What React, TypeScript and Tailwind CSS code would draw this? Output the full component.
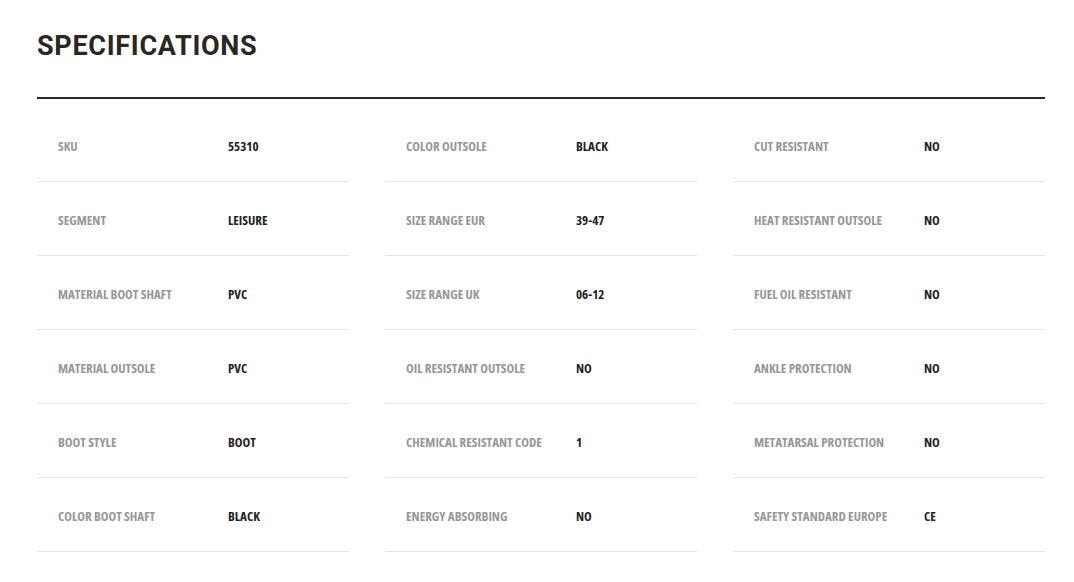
const columns: [string, string][][] = [
  [
    ["SKU", "55310"],
    ["SEGMENT", "LEISURE"],
    ["MATERIAL BOOT SHAFT", "PVC"],
    ["MATERIAL OUTSOLE", "PVC"],
    ["BOOT STYLE", "BOOT"],
    ["COLOR BOOT SHAFT", "BLACK"],
  ],
  [
    ["COLOR OUTSOLE", "BLACK"],
    ["SIZE RANGE EUR", "39-47"],
    ["SIZE RANGE UK", "06-12"],
    ["OIL RESISTANT OUTSOLE", "NO"],
    ["CHEMICAL RESISTANT CODE", "1"],
    ["ENERGY ABSORBING", "NO"],
  ],
  [
    ["CUT RESISTANT", "NO"],
    ["HEAT RESISTANT OUTSOLE", "NO"],
    ["FUEL OIL RESISTANT", "NO"],
    ["ANKLE PROTECTION", "NO"],
    ["METATARSAL PROTECTION", "NO"],
    ["SAFETY STANDARD EUROPE", "CE"],
  ],
];

export default function App() {
  return (
    <div className="bg-white min-h-screen pl-[37px] pr-[29px] pt-[30px] font-['Open_Sans',sans-serif]">
      <h2 className="font-['Roboto',sans-serif] text-[27px] leading-[32px] font-bold tracking-[0.7px] text-[#2a2623]">
        SPECIFICATIONS
      </h2>
      <div className="mt-[35px] h-[2px] bg-[#2b2b2b]" />

      <div className="grid grid-cols-3 gap-x-[36px] mt-[9px]">
        {columns.map((col, i) => (
          <div key={i} className="flex flex-col">
            {col.map(([label, value]) => (
              <div
                key={label}
                className="h-[74px] flex items-center pt-[5px] border-b border-[#e4e4e4] text-[13px] font-bold font-stretch-condensed"
              >
                <span className="w-[191px] pl-[21px] text-[#979797]">{label}</span>
                <span className="text-[#1f1f1f]">{value}</span>
              </div>
            ))}
          </div>
        ))}
      </div>
    </div>
  );
}
